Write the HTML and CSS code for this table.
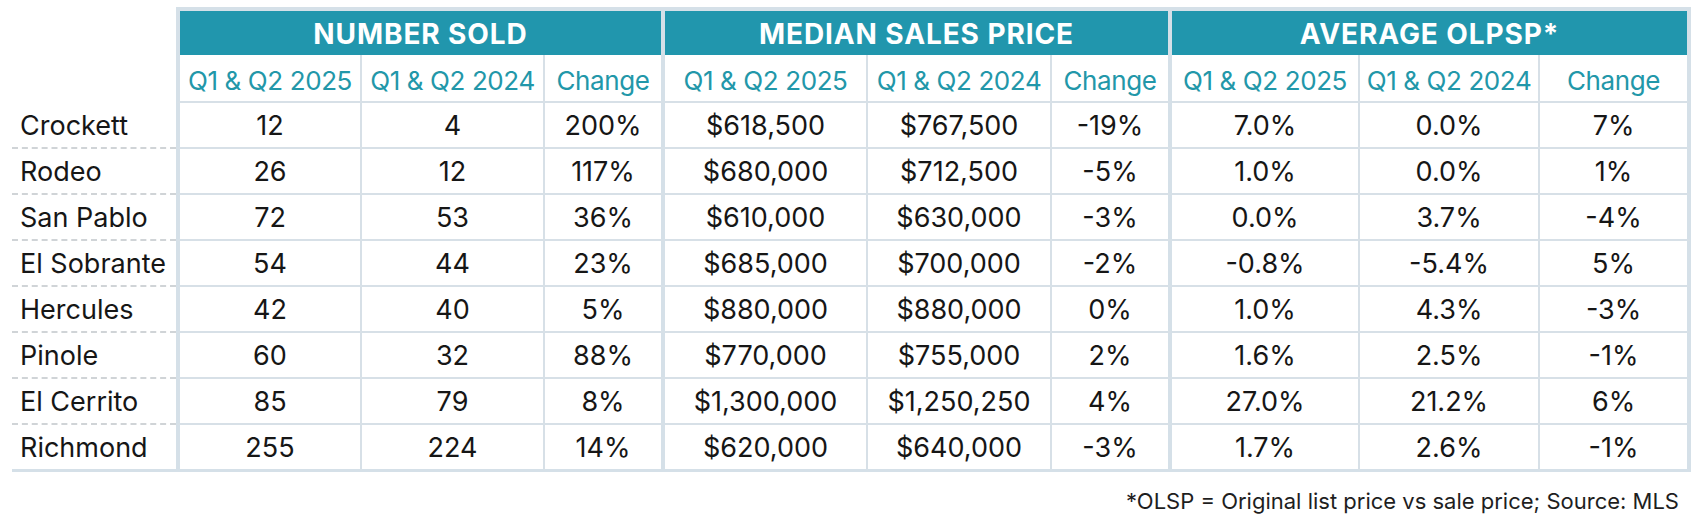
FILE: index.html
```html
<!DOCTYPE html>
<html lang="en">
<head>
<meta charset="utf-8">
<title>Sales Summary</title>
<link rel="stylesheet" href="styles.css">
</head>
<body>
<div class="page">
  <table class="stats">
    <colgroup>
      <col class="w-label">
      <col class="w-c1"><col class="w-c2"><col class="w-c3">
      <col class="w-c4"><col class="w-c5"><col class="w-c6">
      <col class="w-c7"><col class="w-c8"><col class="w-c9">
    </colgroup>
    <thead>
      <tr class="groups">
        <th class="blank"></th>
        <th colspan="3" class="group first">NUMBER SOLD</th>
        <th colspan="3" class="group">MEDIAN SALES PRICE</th>
        <th colspan="3" class="group">AVERAGE OLPSP*</th>
      </tr>
      <tr class="subs">
        <th class="blank"></th>
        <th class="first">Q1 &amp; Q2 2025</th><th>Q1 &amp; Q2 2024</th><th class="end">Change</th>
        <th>Q1 &amp; Q2 2025</th><th>Q1 &amp; Q2 2024</th><th class="end">Change</th>
        <th>Q1 &amp; Q2 2025</th><th>Q1 &amp; Q2 2024</th><th class="end">Change</th>
      </tr>
    </thead>
    <tbody>
      <tr><td class="label">Crockett</td><td class="first">12</td><td>4</td><td class="end">200%</td><td>$618,500</td><td>$767,500</td><td class="end">-19%</td><td>7.0%</td><td>0.0%</td><td class="end">7%</td></tr>
      <tr><td class="label">Rodeo</td><td class="first">26</td><td>12</td><td class="end">117%</td><td>$680,000</td><td>$712,500</td><td class="end">-5%</td><td>1.0%</td><td>0.0%</td><td class="end">1%</td></tr>
      <tr><td class="label">San Pablo</td><td class="first">72</td><td>53</td><td class="end">36%</td><td>$610,000</td><td>$630,000</td><td class="end">-3%</td><td>0.0%</td><td>3.7%</td><td class="end">-4%</td></tr>
      <tr><td class="label">El Sobrante</td><td class="first">54</td><td>44</td><td class="end">23%</td><td>$685,000</td><td>$700,000</td><td class="end">-2%</td><td>-0.8%</td><td>-5.4%</td><td class="end">5%</td></tr>
      <tr><td class="label">Hercules</td><td class="first">42</td><td>40</td><td class="end">5%</td><td>$880,000</td><td>$880,000</td><td class="end">0%</td><td>1.0%</td><td>4.3%</td><td class="end">-3%</td></tr>
      <tr><td class="label">Pinole</td><td class="first">60</td><td>32</td><td class="end">88%</td><td>$770,000</td><td>$755,000</td><td class="end">2%</td><td>1.6%</td><td>2.5%</td><td class="end">-1%</td></tr>
      <tr><td class="label">El Cerrito</td><td class="first">85</td><td>79</td><td class="end">8%</td><td>$1,300,000</td><td>$1,250,250</td><td class="end">4%</td><td>27.0%</td><td>21.2%</td><td class="end">6%</td></tr>
      <tr class="last"><td class="label">Richmond</td><td class="first">255</td><td>224</td><td class="end">14%</td><td>$620,000</td><td>$640,000</td><td class="end">-3%</td><td>1.7%</td><td>2.6%</td><td class="end">-1%</td></tr>
    </tbody>
  </table>
  <p class="note">*OLSP = Original list price vs sale price; Source: MLS</p>
</div>
</body>
</html>
```

FILE: styles.css
```css
html, body {
  margin: 0;
  padding: 0;
  background: #ffffff;
}

body {
  font-family: "Inter", "Noto Sans", sans-serif;
  color: #161616;
}

.page {
  width: 1679px;
  padding: 7px 0 0 12px;
}

.stats {
  border-collapse: separate;
  border-spacing: 0;
  table-layout: fixed;
  width: 1679px;
}

.w-label { width: 164px; }
.w-c1 { width: 186px; }
.w-c2 { width: 183px; }
.w-c3 { width: 120px; }
.w-c4 { width: 203px; }
.w-c5 { width: 184px; }
.w-c6 { width: 120px; }
.w-c7 { width: 188px; }
.w-c8 { width: 180px; }
.w-c9 { width: 151px; }

.stats th,
.stats td {
  box-sizing: border-box;
  padding: 0;
  text-align: center;
  white-space: nowrap;
}

.stats th.blank {
  border: 0;
  background: transparent;
}

/* group header band */
.groups th.group {
  height: 48px;
  background: #2196ad;
  color: #ffffff;
  font-size: 28px;
  font-weight: 700;
  letter-spacing: 0.9px;
  border-top: 4px solid #d5e0e8;
  border-right: 4px solid #d5e0e8;
  padding-top: 1px;
}

.groups th.group.first {
  border-left: 4px solid #d5e0e8;
}

/* sub header */
.subs th {
  height: 48px;
  color: #2297a9;
  font-size: 26px;
  font-weight: 400;
  letter-spacing: -0.4px;
  border-right: 2px solid #d7e0e7;
  border-bottom: 2px solid #d7e0e7;
  padding-top: 5px;
}

.subs th.first,
.stats td.first {
  border-left: 4px solid #d5e0e8;
}

.subs th.end,
.stats td.end {
  border-right: 4px solid #d5e0e8;
}

.subs th.blank {
  border: 0;
}

/* body */
.stats td {
  height: 46px;
  font-size: 27px;
  font-weight: 400;
  border-right: 2px solid #d7e0e7;
  border-bottom: 2px solid #d7e0e7;
  padding-top: 1px;
}

.stats td.label {
  text-align: left;
  padding-left: 8px;
  border-right: 0;
  border-bottom: 2px dashed #d0d4d7;
}

.stats tr.last td {
  height: 47px;
  border-bottom: 3px solid #d5e0e8;
}

.stats tr.last td.label {
  border-bottom: 3px solid #d5e0e8;
}

.note {
  margin: 16px 0 0 0;
  width: 1667px;
  text-align: right;
  font-size: 22px;
  line-height: 26px;
  color: #1e1e1e;
}
```
